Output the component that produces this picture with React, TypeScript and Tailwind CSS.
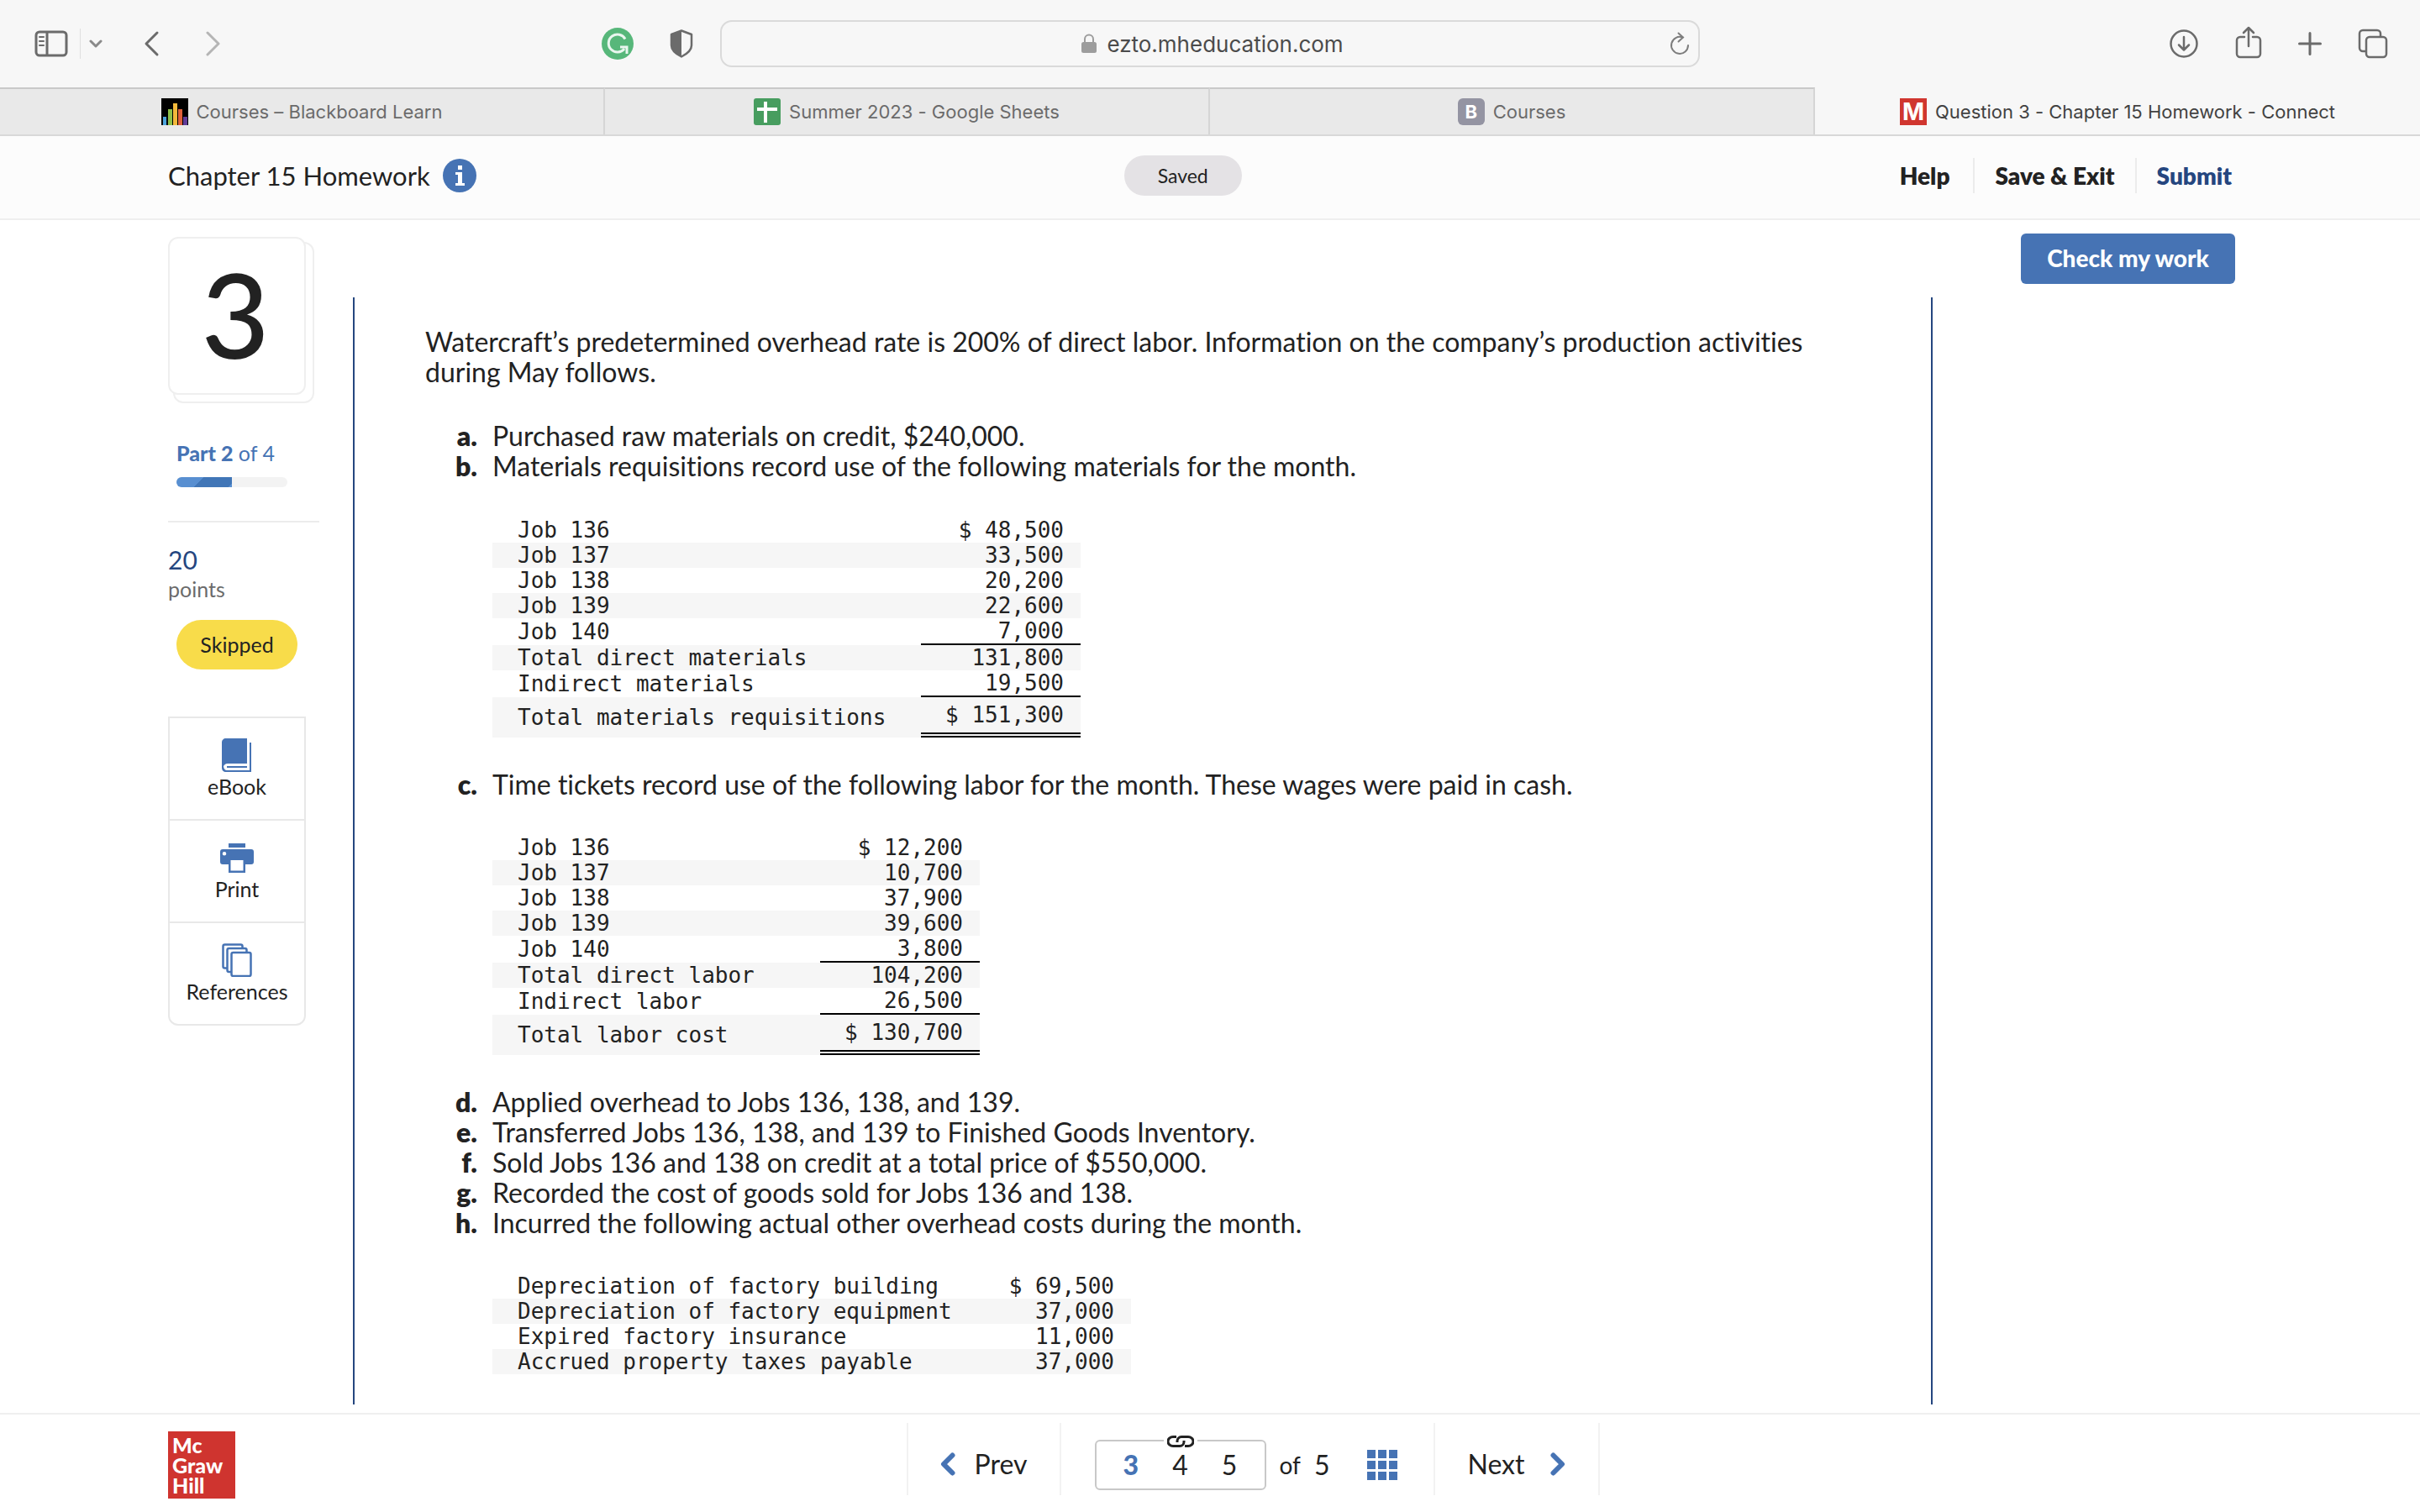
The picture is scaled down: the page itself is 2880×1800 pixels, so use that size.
import React from 'react';

type Row = {
  label: string;
  amount: string;
  line?: 'single' | 'double';
};

const materials: Row[] = [
  { label: 'Job 136', amount: '$ 48,500' },
  { label: 'Job 137', amount: '33,500' },
  { label: 'Job 138', amount: '20,200' },
  { label: 'Job 139', amount: '22,600' },
  { label: 'Job 140', amount: '7,000', line: 'single' },
  { label: 'Total direct materials', amount: '131,800' },
  { label: 'Indirect materials', amount: '19,500', line: 'single' },
  { label: 'Total materials requisitions', amount: '$ 151,300', line: 'double' },
];

const labor: Row[] = [
  { label: 'Job 136', amount: '$ 12,200' },
  { label: 'Job 137', amount: '10,700' },
  { label: 'Job 138', amount: '37,900' },
  { label: 'Job 139', amount: '39,600' },
  { label: 'Job 140', amount: '3,800', line: 'single' },
  { label: 'Total direct labor', amount: '104,200' },
  { label: 'Indirect labor', amount: '26,500', line: 'single' },
  { label: 'Total labor cost', amount: '$ 130,700', line: 'double' },
];

const overhead: Row[] = [
  { label: 'Depreciation of factory building', amount: '$ 69,500' },
  { label: 'Depreciation of factory equipment', amount: '37,000' },
  { label: 'Expired factory insurance', amount: '11,000' },
  { label: 'Accrued property taxes payable', amount: '37,000' },
];

const lineStyles = {
  none: '',
  single: 'border-b-2 border-black',
  double: 'border-b-6 border-double border-black py-[6px]',
};

const CostTable = ({ rows, width, title }: { rows: Row[]; width: string; title: string }) => (
  <table
    aria-label={title}
    className={`${width} table-fixed border-separate border-spacing-0 font-['DejaVu_Sans_Mono',monospace] text-[26px] leading-[30px]`}
  >
    <colgroup>
      <col />
      <col className="w-[190px]" />
    </colgroup>
    <tbody>
      {rows.map((row) => (
        <tr key={row.label} className="even:bg-[#f6f6f6]">
          <td className="whitespace-nowrap pl-[30px] align-middle">{row.label}</td>
          <td className={`whitespace-nowrap pr-5 text-right ${lineStyles[row.line ?? 'none']}`}>{row.amount}</td>
        </tr>
      ))}
    </tbody>
  </table>
);

const Item = ({ letter, children }: { letter: string; children: React.ReactNode }) => (
  <li className="flex">
    <span className="mr-[18px] w-[62px] shrink-0 text-right font-extrabold">{letter}.</span>
    <div>{children}</div>
  </li>
);

const Toolbar = () => (
  <div className="grid h-[104px] grid-cols-[1fr_minmax(0,1166px)_1fr] items-center bg-[#f7f7f7] text-[#6b6b6b]">
    <div className="flex items-center justify-between pl-[41px] pr-8">
      <div className="flex items-center">
        <button aria-label="Show sidebar">
          <svg className="h-8 w-10" viewBox="0 0 40 32" fill="none" stroke="currentColor" strokeWidth="3">
            <rect x="2" y="2" width="36" height="28" rx="4" />
            <path d="M15 2v28" />
            <path d="M6 8h5M6 13h5M6 18h5" strokeWidth="2" strokeLinecap="round" />
          </svg>
        </button>
        <button aria-label="Tab groups" className="ml-3.5 border-l border-[#dfdfdf] py-3 pl-2.5">
          <svg className="h-3 w-4" viewBox="0 0 16 12" fill="none" stroke="#8a8a8a" strokeWidth="3" strokeLinecap="round" strokeLinejoin="round">
            <path d="M2 3l6 6 6-6" />
          </svg>
        </button>
        <button aria-label="Back" className="ml-12">
          <svg className="h-8 w-5" viewBox="0 0 20 32" fill="none" stroke="currentColor" strokeWidth="3" strokeLinecap="round" strokeLinejoin="round">
            <path d="M17 3L4 16l13 13" />
          </svg>
        </button>
        <button aria-label="Forward" className="ml-[54px]">
          <svg className="h-8 w-5" viewBox="0 0 20 32" fill="none" stroke="#b5b5b5" strokeWidth="3" strokeLinecap="round" strokeLinejoin="round">
            <path d="M3 3l13 13L3 29" />
          </svg>
        </button>
      </div>
      <div className="flex items-center gap-[42px]">
        <button aria-label="Grammarly">
          <svg className="h-10 w-10" viewBox="0 0 40 40" fill="none">
            <circle cx="20" cy="20" r="19" fill="#57b77a" />
            <path d="M29 14.500A10.500 10.500 0 1 0 28 26" stroke="#e9f6ee" strokeWidth="3" />
            <path d="M23 24h8v8" stroke="#e9f6ee" strokeWidth="3" />
          </svg>
        </button>
        <button aria-label="Privacy report">
          <svg className="h-[34px] w-7" viewBox="0 0 28 34">
            <path d="M14 1.500L26 6v13c0 6-6 10.500-12 13.500C8 29.500 2 25 2 19V6z" fill="none" stroke="currentColor" strokeWidth="2.500" strokeLinejoin="round" />
            <path d="M14 1.500L2 6v13c0 6 6 10.500 12 13.500z" fill="currentColor" />
          </svg>
        </button>
      </div>
    </div>
    <div className="flex h-14 items-center rounded-[14px] border-2 border-[#dadada] pl-10 pr-2.5 font-['Inter',sans-serif] text-[26px] text-[#4b4b4b]">
      <div className="flex flex-1 items-center justify-center gap-3">
        <svg className="h-6 w-[18px]" viewBox="0 0 18 24" fill="#9d9d9d">
          <rect y="10" width="18" height="13" rx="2.500" />
          <path d="M4 11V6.500a5 5 0 0 1 10 0V11" fill="none" stroke="#9d9d9d" strokeWidth="2" />
        </svg>
        <span>ezto.mheducation.com</span>
      </div>
      <button aria-label="Reload">
        <svg className="h-7 w-6" viewBox="0 0 24 28" fill="none" stroke="#7d7d7d" strokeWidth="2" strokeLinecap="round">
          <path d="M15.500 6.500A10 10 0 1 0 22 16" />
          <path d="M10.500 1.500l5.500 5-5.500 5" />
        </svg>
      </button>
    </div>
    <div className="flex items-center justify-end gap-[43px] pr-[38px]">
      <button aria-label="Downloads">
        <svg className="h-9 w-9" viewBox="0 0 36 36" fill="none" stroke="currentColor" strokeWidth="2.500" strokeLinecap="round" strokeLinejoin="round">
          <circle cx="18" cy="18" r="15.500" />
          <path d="M18 10v15M12 19.500l6 6 6-6" />
        </svg>
      </button>
      <button aria-label="Share" className="pb-1">
        <svg className="h-10 w-8" viewBox="0 0 32 40" fill="none" stroke="currentColor" strokeWidth="2.500" strokeLinecap="round" strokeLinejoin="round">
          <path d="M11 14H6a4 4 0 0 0-4 4v16a4 4 0 0 0 4 4h20a4 4 0 0 0 4-4V18a4 4 0 0 0-4-4h-5" />
          <path d="M16 25V3M10 9l6-6 6 6" />
        </svg>
      </button>
      <button aria-label="New tab">
        <svg className="h-7 w-7" viewBox="0 0 28 28" fill="none" stroke="currentColor" strokeWidth="3" strokeLinecap="round">
          <path d="M14 1.500v25M1.500 14h25" />
        </svg>
      </button>
      <button aria-label="Tab overview">
        <svg className="h-9 w-9" viewBox="0 0 36 36" fill="none" stroke="currentColor" strokeWidth="2.500">
          <path d="M10 27H6a4 4 0 0 1-4-4V6a4 4 0 0 1 4-4h17a4 4 0 0 1 4 4v4" />
          <rect x="10" y="10" width="24" height="24" rx="4" />
        </svg>
      </button>
    </div>
  </div>
);

const tabClass =
  'flex items-center justify-center gap-2.5 border-r-2 border-t-2 border-r-[#d5d5d5] border-t-[#c9c9c9] bg-[#e9e9e9] text-[#6b6b6b]';

const TabBar = () => (
  <nav aria-label="Tabs" className="grid h-[58px] grid-cols-4 border-b-2 border-[#d8d8d8] font-['Inter',sans-serif] text-[22px]">
    <button className={tabClass}>
      <svg className="h-8 w-8" viewBox="0 0 32 32">
        <rect width="32" height="32" fill="#000" />
        <rect x="2" y="22" width="4" height="10" fill="#4ba3dc" />
        <rect x="8" y="13" width="5" height="19" fill="#8dc04a" />
        <rect x="14" y="6" width="5" height="26" fill="#f2b93b" />
        <rect x="20" y="13" width="5" height="19" fill="#e0603a" />
        <rect x="26" y="22" width="5" height="10" fill="#5f3b97" />
      </svg>
      Courses – Blackboard Learn
    </button>
    <button className={tabClass}>
      <svg className="h-8 w-8" viewBox="0 0 32 32">
        <rect width="32" height="32" rx="3" fill="#479d5f" />
        <path d="M4 13h24M14 4v25" stroke="#fff" strokeWidth="4" />
      </svg>
      Summer 2023 - Google Sheets
    </button>
    <button className={tabClass}>
      <span className="flex h-8 w-8 items-center justify-center rounded-md bg-[#9494a2] font-bold text-white">B</span>
      Courses
    </button>
    <button className="flex items-center justify-center gap-2.5 border-t-2 border-[#f7f7f7] bg-[#f7f7f7] text-[#424242]">
      <span className="flex h-8 w-8 items-center justify-center bg-[#d0362f] text-[28px] font-bold text-white">M</span>
      Question 3 - Chapter 15 Homework - Connect
    </button>
  </nav>
);

const Header = () => (
  <header className="flex h-[100px] items-center justify-between border-b-2 border-[#efefef] bg-[#fcfcfc] pb-1 pl-[200px] pr-[224px]">
    <div className="flex items-center gap-[15px]">
      <h1 className="text-[31px] leading-9">Chapter 15 Homework</h1>
      <button aria-label="Assignment information">
        <svg className="h-10 w-10" viewBox="0 0 40 40">
          <circle cx="20" cy="20" r="20" fill="#4673b4" />
          <path d="M18 8h5v5h-5zM15 16h8v13h3v3H15v-3h3V19h-3z" fill="#fff" />
        </svg>
      </button>
    </div>
    <div role="status" className="mr-3 flex h-12 w-[140px] items-center justify-center rounded-full bg-[#e4e2e5] text-[23px]">
      Saved
    </div>
    <nav className="flex h-10 items-center text-[28px] font-extrabold">
      <a href="#help" className="pr-7">Help</a>
      <a href="#exit" className="border-x-2 border-[#ececec] px-6">Save &amp; Exit</a>
      <a href="#submit" className="pl-6 text-[#25467f]">Submit</a>
    </nav>
  </header>
);

const Sidebar = () => (
  <aside className="w-[420px] shrink-0 pl-[200px] pt-5">
    <div className="relative h-[198px] w-[174px]">
      <div className="absolute bottom-0 right-0 h-[192px] w-[168px] rounded-xl border-2 border-[#efefef]"></div>
      <div className="relative flex h-[188px] w-[164px] items-center justify-center rounded-xl border-2 border-[#efefef] bg-white pb-1.5 pr-1 text-[140px] font-medium leading-none">
        3
      </div>
    </div>

    <div className="ml-2.5 mt-11 text-[25px] leading-[30px] text-[#4673b4]">
      <span className="font-black">Part 2</span> of 4
    </div>
    <div className="ml-2.5 mt-3.5 h-3 w-[132px] overflow-hidden rounded-full bg-[#f3f3f3]">
      <div className="h-full w-1/2 bg-[linear-gradient(135deg,#588fd1_0_42%,#4176b7_42%_94%,#588fd1_94%)]"></div>
    </div>

    <div className="mt-10 w-[180px] border-t-2 border-[#ececec] pt-[26px]">
      <div className="text-[30px] leading-9 text-[#25467f]">20</div>
      <div className="mt-0.5 text-[25px] leading-[30px] text-[#6b6b6b]">points</div>
    </div>
    <div className="ml-2.5 mt-[22px] flex h-[59px] w-[144px] items-center justify-center rounded-full bg-[#f8dc4a] text-[25px]">
      Skipped
    </div>

    <div className="mt-14 flex w-[164px] flex-col divide-y-2 divide-[#e8e8e8] rounded-b-xl border-2 border-[#e8e8e8] text-[25px] leading-[30px]">
      <button className="flex h-[122px] flex-col items-center gap-0.5 pt-6">
        <svg className="h-10 w-10" viewBox="0 0 40 40" fill="#4673b4">
          <path d="M7 0h25v30H9c-3 0-4 1.500-5 3 0 3 2 5 4 5h27V5h2v35H7c-3 0-5-2-5-5V5c0-3 2-5 5-5z" />
          <path d="M8 33h24v2H8z" />
        </svg>
        eBook
      </button>
      <button className="flex h-[122px] flex-col items-center gap-0.5 pt-6">
        <svg className="h-10 w-10" viewBox="0 0 40 40" fill="#4673b4">
          <path d="M10 3h20v5H10z" />
          <path fillRule="evenodd" d="M3 10h34a3 3 0 0 1 3 3v12a3 3 0 0 1-3 3h-7v10H10V28H3a3 3 0 0 1-3-3V13a3 3 0 0 1 3-3zm2 3a2 2 0 1 0 0 4.500a2 2 0 0 0 0-4.500zM12.500 23v12.500h15V23z" />
        </svg>
        Print
      </button>
      <button className="flex h-[120px] flex-col items-center gap-0.5 pt-6">
        <svg className="h-10 w-10" viewBox="0 0 40 40" fill="#fff" stroke="#4673b4" strokeWidth="2.500">
          <rect x="3.500" y="1.500" width="23" height="28" rx="2" />
          <rect x="8.500" y="6" width="23" height="28" rx="2" />
          <rect x="13.500" y="11" width="23" height="28" rx="2" />
        </svg>
        References
      </button>
    </div>
  </aside>
);

const Question = () => (
  <section className="mb-2.5 mt-[92px] min-w-0 flex-1 border-x-2 border-[#25467f] px-[84px] pb-9 pt-[35px] text-[32px] leading-9">
    <p className="max-w-[1660px]">
      Watercraft’s predetermined overhead rate is 200% of direct labor. Information on the company’s production
      activities during May follows.
    </p>
    <ol className="mt-10">
      <Item letter="a">Purchased raw materials on credit, $240,000.</Item>
      <Item letter="b">
        Materials requisitions record use of the following materials for the month.
        <div className="mb-[38px] mt-[43px]">
          <CostTable title="Materials requisitions" rows={materials} width="w-[700px]" />
        </div>
      </Item>
      <Item letter="c">
        Time tickets record use of the following labor for the month. These wages were paid in cash.
        <div className="mb-[38px] mt-[42px]">
          <CostTable title="Labor time tickets" rows={labor} width="w-[580px]" />
        </div>
      </Item>
      <Item letter="d">Applied overhead to Jobs 136, 138, and 139.</Item>
      <Item letter="e">Transferred Jobs 136, 138, and 139 to Finished Goods Inventory.</Item>
      <Item letter="f">Sold Jobs 136 and 138 on credit at a total price of $550,000.</Item>
      <Item letter="g">Recorded the cost of goods sold for Jobs 136 and 138.</Item>
      <Item letter="h">
        Incurred the following actual other overhead costs during the month.
        <div className="mt-[42px]">
          <CostTable title="Other overhead costs" rows={overhead} width="w-[760px]" />
        </div>
      </Item>
    </ol>
  </section>
);

const Footer = () => (
  <footer className="grid h-[118px] grid-cols-[1fr_auto_1fr] border-t-2 border-[#efefef] pl-[200px] pr-[98px]">
    <div className="mt-5 h-20 w-20 bg-[#cf342f] pl-[5px] pt-1 text-[25px] font-black leading-6 text-white">
      Mc
      <br />
      Graw
      <br />
      Hill
    </div>
    <nav aria-label="Questions" className="mt-2.5 flex h-[86px] divide-x-2 divide-[#f2f2f2] border-x-2 border-[#f2f2f2] text-[32px]">
      <button className="flex w-[182px] items-center justify-center gap-[23px] pb-1 pt-4">
        <svg className="h-7 w-[18px]" viewBox="0 0 18 28" fill="none" stroke="#4673b4" strokeWidth="6" strokeLinecap="round" strokeLinejoin="round">
          <path d="M14.500 3.500L4 14l10.500 10.500" />
        </svg>
        Prev
      </button>
      <div className="flex w-[445px] items-start pl-10 pt-5">
        <div className="relative flex h-[60px] w-[204px] items-center justify-around rounded-md border-2 border-[#c8c8c8] px-3">
          <div className="absolute -top-2 left-20 bg-white px-1">
            <svg className="h-4 w-8" viewBox="0 0 32 16" fill="none" stroke="#222" strokeWidth="3">
              <path d="M11 2.500H7a5.500 5 0 0 0 0 11h8a5 5 0 0 0 5-5V7" />
              <path d="M21 13.500h4a5.500 5 0 0 0 0-11h-8a5 5 0 0 0-5 5V9" />
            </svg>
          </div>
          <button className="font-black text-[#4673b4]">3</button>
          <button>4</button>
          <button>5</button>
        </div>
        <div className="ml-4 flex h-[60px] items-center gap-4">
          <span className="text-[28px]">of</span>
          <span>5</span>
        </div>
        <button aria-label="Question grid" className="ml-[45px] mt-3">
          <svg className="h-9 w-9" viewBox="0 0 36 36" fill="#4673b4">
            <path d="M0 0h10v10H0zM13 0h10v10H13zM26 0h10v10H26zM0 13h10v10H0zM13 13h10v10H13zM26 13h10v10H26zM0 26h10v10H0zM13 26h10v10H13zM26 26h10v10H26z" />
          </svg>
        </button>
      </div>
      <button className="flex w-[194px] items-center justify-center gap-[30px] pb-1 pt-4">
        Next
        <svg className="h-7 w-[18px]" viewBox="0 0 18 28" fill="none" stroke="#4673b4" strokeWidth="6" strokeLinecap="round" strokeLinejoin="round">
          <path d="M3.500 3.500L14 14 3.500 24.500" />
        </svg>
      </button>
    </nav>
  </footer>
);

const App = () => {
  return (
    <div className="flex min-h-screen flex-col bg-white font-['Lato',sans-serif] text-[#222] [font-variant-ligatures:none]">
      <Toolbar />
      <TabBar />
      <Header />
      <main className="flex flex-1">
        <Sidebar />
        <Question />
        <div className="flex w-[580px] shrink-0 items-start justify-end pr-[220px] pt-4">
          <button className="h-[60px] w-[255px] rounded-md bg-[#4673b4] pb-0.5 text-[28px] font-black text-white">
            Check my work
          </button>
        </div>
      </main>
      <Footer />
    </div>
  );
};

export default App;
